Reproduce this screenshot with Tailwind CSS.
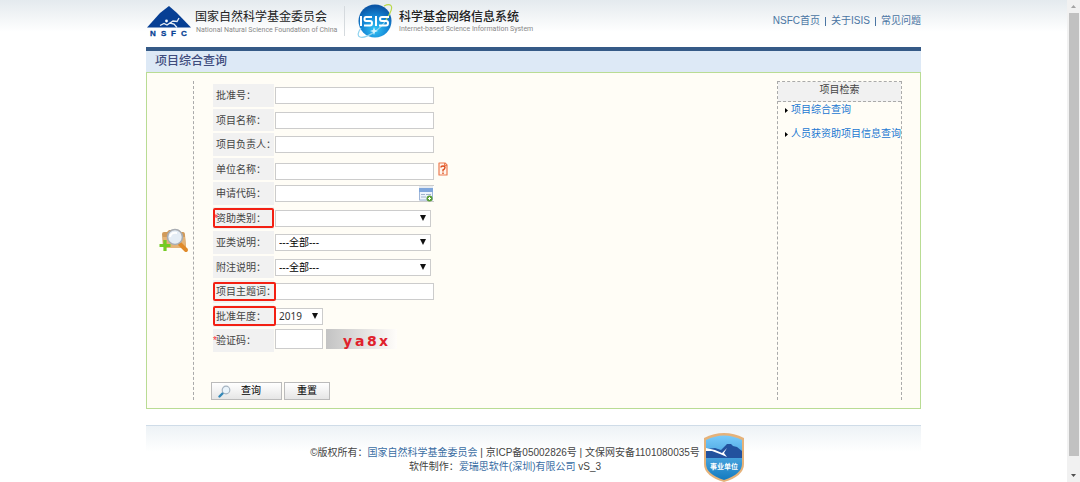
<!DOCTYPE html>
<html lang="zh-CN">
<head>
<meta charset="utf-8">
<meta name="viewport" content="width=device-width, initial-scale=1">
<title>项目综合查询</title>
<script src="https://cdn.jsdelivr.net/npm/@tailwindcss/browser@4"></script>
</head>
<body class="flex min-h-screen bg-white font-['Liberation_Sans','Noto_Sans_CJK_SC',sans-serif] text-[10px] leading-[14px] text-[#444]">
<div class="min-w-0 flex-1 bg-linear-to-b from-[#e4eaee] to-white to-[32px]">
  <div class="mx-auto max-w-[775px]">
    <header class="flex h-[47px] items-start justify-between">
      <div class="flex items-start">
        <svg class="mt-[5px] h-[33px] w-[46px] shrink-0" viewBox="0 0 46 33" role="img" aria-label="NSFC">
          <path d="M23 1 L31 8 L45 22.500 H1 L14 8 Z" fill="#073f94"/>
          <circle cx="20.500" cy="16" r="1.400" fill="#fff"/>
          <path d="M14 20.500 L18 18.500 L21 20 L24 18 L28 19 L31 22.500 M24 18 L27 16 L31 16.500 L33 13" stroke="#e8eef6" stroke-width="1.300" fill="none"/>
          <g font-family="Liberation Sans" font-weight="700" font-size="8" fill="#073f94" stroke="#073f94" stroke-width=".3"><text x="4" y="31">N</text><text x="15" y="31">S</text><text x="25" y="31">F</text><text x="35" y="31">C</text></g>
        </svg>
        <div class="mt-[9px] ml-[3px] w-[139px] whitespace-nowrap">
          <p class="text-[12px] leading-[16px] text-[#222]">国家自然科学基金委员会</p>
          <p class="pl-px font-[Roboto,sans-serif] text-[7px] leading-[10px] text-[#888]">National Natural Science Foundation of China</p>
        </div>
        <div class="mt-[6px] ml-[10px] h-[30px] w-px bg-[#d5dade]"></div>
        <svg class="mt-[3px] ml-[12px] h-[36px] w-[37px] shrink-0" viewBox="0 0 37 36" role="img" aria-label="ISIS">
          <defs><radialGradient id="globe" cx=".5" cy=".75" r=".7"><stop offset="0" stop-color="#31c4f5"/><stop offset=".55" stop-color="#1687d6"/><stop offset="1" stop-color="#0b56a6"/></radialGradient></defs>
          <circle cx="18" cy="18" r="16.500" fill="url(#globe)"/>
          <path d="M29 17 C24 26 9 36 3 34 C0 33 1 29 4 25" fill="none" stroke="#8fd3ef" stroke-width="1.200"/>
          <path d="M27 3 C33 0 37 2 33 10 C32 13 30 15 29 17" fill="none" stroke="#b9d94a" stroke-width="1.200"/>
          <path d="M4 13 V23 M15 14 H9 Q7.500 14 7.500 16 Q7.500 18 9 18 H13 Q15 18 15 20 Q15 22.500 13 22.500 H7 M19 13 V23 M32 14 H25 Q23 14 23 16 Q23 18 25 18 H29 Q31 18 31 20 Q31 22.500 29 22.500 H22" fill="none" stroke="#fff" stroke-width="2"/>
          <path d="M17 24 L18 27 L21 28 L18 29 L17 32 L16 29 L13 28 L16 27 Z" fill="#d7f5ff"/>
        </svg>
        <div class="mt-[9px] ml-[5px] whitespace-nowrap">
          <p class="text-[12px] leading-[16px] font-medium text-[#222]">科学基金网络信息系统</p>
          <p class="font-[Roboto,sans-serif] text-[7px] leading-[8px] text-[#888]">Internet-based Science Information System</p>
        </div>
      </div>
      <nav class="mt-[14px] flex items-center gap-[5px] whitespace-nowrap text-[#4a75a3]">
        <a href="#">NSFC首页</a><span class="h-[9px] w-px bg-[#4a75a3]"></span><a href="#">关于ISIS</a><span class="h-[9px] w-px bg-[#4a75a3]"></span><a href="#">常见问题</a>
      </nav>
    </header>

    <h1 class="border-t-4 border-[#355a87] bg-[#dde9f6] pl-[9px] text-[12px] leading-[21px] font-medium text-[#3f4c7d]">项目综合查询</h1>

    <main class="flex border border-[#b9dc94] bg-[#fffdf6] pt-[8px] pb-[8px]">
      <div class="flex w-[47px] shrink-0 items-center justify-end border-r border-dashed border-[#aaa] pr-[4px]">
        <svg class="h-[26px] w-[30px]" viewBox="0 0 30 26" aria-hidden="true">
          <path d="M3 6 Q3 4 5 4 H8 L10 2 H20 L22 4 H24 Q26 4 26 7 L27 19 H4 Z" fill="#d19a5a"/><path d="M4 9 H26 L27 20 H5 Z" fill="#e5b478"/>
          <path d="M21 16 L27 22" stroke="#e08a2a" stroke-width="4" stroke-linecap="round"/>
          <circle cx="16" cy="9" r="7.500" fill="#e5edf5" stroke="#a9adb3" stroke-width="1.600"/><path d="M11 9 Q12 4 18 5" stroke="#fff" stroke-width="2" fill="none"/>
          <path d="M6 12 V23 M.5 17.500 H11.500" stroke="#73cb22" stroke-width="3.200"/>
        </svg>
      </div>

      <form class="min-w-0 flex-1 pt-[3px] pl-[17px]" onsubmit="return false">
        <div class="ml-[2px] flex flex-col gap-[2px] *:flex *:h-[22px] *:items-center *:gap-px *:odd:h-[23px]">
          <div><label for="no" class="h-full w-[61px] bg-[#f1f1f1] pl-[3px] leading-[23px] whitespace-nowrap">批准号：</label><input id="no" class="h-[17px] w-[159px] border border-[#ccc] bg-white px-1"></div>
          <div><label for="name" class="h-full w-[61px] bg-[#f1f1f1] pl-[3px] leading-[23px] whitespace-nowrap">项目名称：</label><input id="name" class="h-[17px] w-[159px] border border-[#ccc] bg-white px-1"></div>
          <div><label for="leader" class="h-full w-[61px] bg-[#f1f1f1] pl-[3px] leading-[23px] whitespace-nowrap">项目负责人：</label><input id="leader" class="h-[17px] w-[159px] border border-[#ccc] bg-white px-1"></div>
          <div><label for="org" class="h-full w-[61px] bg-[#f1f1f1] pl-[3px] leading-[23px] whitespace-nowrap">单位名称：</label><input id="org" class="h-[17px] w-[159px] self-end border border-[#ccc] bg-white px-1">
            <button type="button" aria-label="帮助" class="ml-[3px]"><svg class="h-[14px] w-[10px]" viewBox="0 0 10 14"><path d="M1 1 H7 L9 3 V13 H1 Z" fill="#fff4ec" stroke="#ec7b50" stroke-width="1.200" stroke-linejoin="round"/><path d="M6.500 1 V3.500 H9" stroke="#ec7b50" fill="none"/><path d="M3 5.500 Q3 4 5 4 Q7 4 7 5.500 Q7 7 5 8 V9.500 M5 10.500 V12" fill="none" stroke="#dc4d1c" stroke-width="1.400"/></svg></button></div>
          <div><label for="code" class="h-full w-[61px] bg-[#f1f1f1] pl-[3px] leading-[23px] whitespace-nowrap">申请代码：</label>
            <div class="flex h-[17px] w-[159px] border-y border-l border-[#ccc] bg-white"><input id="code" class="min-w-0 flex-1 px-1">
              <button type="button" aria-label="选择申请代码" class="mr-px bg-[#e7ebf0]"><svg class="h-[16px] w-[14px]" viewBox="0 0 14 16"><path d="M.5 2.500 H13.500 V14 H.5 Z" fill="#eef4fc" stroke="#9fb6d8"/><path d="M0 2 H14 V6 H0 Z" fill="#7fa6db"/><path d="M2 8.500 H6 M7 8.500 H12 M2 11 H7" stroke="#a2b4cc"/><circle cx="10.500" cy="12.500" r="3" fill="#5a9e37"/><path d="M10.500 11 V14 M9 12.500 H12" stroke="#fff"/></svg></button></div></div>
          <div><label for="type" class="relative h-full w-[61px] bg-[#f1f1f1] pl-[3px] leading-[23px] whitespace-nowrap"><span class="absolute left-px text-red-500">*</span>资助类别：<span class="absolute inset-x-0 inset-y-px rounded-[2px] border-2 border-[#f32013]"></span></label>
            <div class="relative"><select id="type" class="block h-[17px] w-[156px] appearance-none border border-[#ccc] bg-white px-[3px] leading-[15px] text-black"><option></option></select><svg class="pointer-events-none absolute top-[5px] right-[5px] h-[6px] w-[6px]" viewBox="0 0 6 6"><path d="M0 0 H6 L3 6 Z" fill="#111"/></svg></div></div>
          <div><label for="sub" class="h-full w-[61px] bg-[#f1f1f1] pl-[3px] leading-[23px] whitespace-nowrap">亚类说明：</label>
            <div class="relative"><select id="sub" class="block h-[17px] w-[156px] appearance-none border border-[#ccc] bg-white px-[3px] leading-[15px] text-black"><option>---全部---</option></select><svg class="pointer-events-none absolute top-[5px] right-[5px] h-[6px] w-[6px]" viewBox="0 0 6 6"><path d="M0 0 H6 L3 6 Z" fill="#111"/></svg></div></div>
          <div><label for="note" class="h-full w-[61px] bg-[#f1f1f1] pl-[3px] leading-[23px] whitespace-nowrap">附注说明：</label>
            <div class="relative"><select id="note" class="block h-[17px] w-[156px] appearance-none border border-[#ccc] bg-white px-[3px] leading-[15px] text-black"><option>---全部---</option></select><svg class="pointer-events-none absolute top-[5px] right-[5px] h-[6px] w-[6px]" viewBox="0 0 6 6"><path d="M0 0 H6 L3 6 Z" fill="#111"/></svg></div></div>
          <div><label for="topic" class="relative h-full w-[61px] bg-[#f1f1f1] pl-[3px] leading-[23px] whitespace-nowrap">项目主题词：<span class="absolute inset-y-[2px] right-[-2px] left-0 rounded-[2px] border-2 border-[#f32013]"></span></label><input id="topic" class="h-[17px] w-[159px] border border-[#ccc] bg-white px-1"></div>
          <div><label for="year" class="relative z-10 h-full w-[61px] bg-[#f1f1f1] pl-[3px] leading-[23px] whitespace-nowrap">批准年度：<span class="absolute inset-y-px right-[-2px] left-0 rounded-[2px] border-2 border-[#f32013]"></span></label>
            <div class="relative"><select id="year" class="block h-[17px] w-[48px] appearance-none border border-[#ccc] bg-white px-[3px] font-['Noto_Sans',sans-serif] leading-[15px] text-[#333]"><option>2019</option></select><svg class="pointer-events-none absolute top-[5px] right-[5px] h-[6px] w-[6px]" viewBox="0 0 6 6"><path d="M0 0 H6 L3 6 Z" fill="#111"/></svg></div></div>
          <div><label for="captcha" class="relative h-full w-[61px] bg-[#f1f1f1] pl-[3px] leading-[23px] whitespace-nowrap"><span class="absolute left-0 text-red-500">*</span>验证码：</label><input id="captcha" class="h-[20px] w-[48px] self-start border border-[#ccc] bg-white px-1">
            <svg class="ml-[2px] h-[20px] w-[71px] self-start" viewBox="0 0 71 20" role="img" aria-label="验证码"><defs><linearGradient id="cap"><stop offset="0" stop-color="#c3c3c3"/><stop offset="1" stop-color="#fffdfa"/></linearGradient></defs><path d="M0 0 H71 V20 H0 Z" fill="url(#cap)"/><g font-family="DejaVu Sans" font-weight="700" font-size="14" fill="#e0212b"><text x="17" y="17">y</text><text x="29" y="17">a</text><text x="41" y="17">8</text><text x="53" y="17">x</text></g></svg></div>
        </div>
        <div class="mt-[30px] flex gap-[2px] text-black">
          <button type="submit" class="flex h-[18px] w-[71px] items-center gap-[10px] border border-[#bbb] bg-linear-to-b from-white to-[#e6e6e6] pl-[6px]"><svg class="h-[13px] w-[13px]" viewBox="0 0 13 13"><path d="M5 8 L1.500 11.500" stroke="#3388b8" stroke-width="2.400" stroke-linecap="round"/><circle cx="8" cy="5" r="3.800" fill="#eaf4fb" stroke="#a5b3c0" stroke-width="1.200"/></svg>查询</button>
          <button type="reset" class="h-[18px] w-[46px] border border-[#bbb] bg-linear-to-b from-white to-[#e6e6e6]">重置</button>
        </div>
      </form>

      <aside class="mr-[18px] w-[125px] shrink-0 border-x border-t border-dashed border-[#aaa]">
        <h2 class="h-[20px] border-b border-dashed border-[#aaa] bg-[#f1f1f1] text-center leading-[16px]">项目检索</h2>
        <ul class="flex flex-col gap-[10px] pt-px pl-[7px] whitespace-nowrap text-[#1a78d2]">
          <li class="flex items-center gap-[3px]"><svg class="h-[5px] w-[3px] shrink-0" viewBox="0 0 3 5"><path d="M0 0 L3 2.500 L0 5 Z" fill="#000"/></svg><a href="#">项目综合查询</a></li>
          <li class="flex items-center gap-[3px]"><svg class="h-[5px] w-[3px] shrink-0" viewBox="0 0 3 5"><path d="M0 0 L3 2.500 L0 5 Z" fill="#000"/></svg><a href="#">人员获资助项目信息查询</a></li>
        </ul>
      </aside>
    </main>

    <footer class="mt-[16px] flex items-start justify-center gap-[3px] border-t border-[#cfdce8] bg-linear-to-b from-[#edf2f6] to-white to-[26px] pt-[7px] pr-[12px]">
      <div class="pt-[13px] text-center">
        <p>©版权所有：<a href="#" class="text-[#3a6da3]">国家自然科学基金委员会</a> | 京ICP备05002826号 | 文保网安备1101080035号</p>
        <p>软件制作：<a href="#" class="text-[#3a6da3]">爱瑞思软件(深圳)有限公司</a> vS_3</p>
      </div>
      <svg class="h-[49px] w-[42px] shrink-0" viewBox="0 0 42 49" role="img" aria-label="事业单位">
        <defs><linearGradient id="shield" x2="0" y2="1"><stop offset="0" stop-color="#79cbfb"/><stop offset="1" stop-color="#137abf"/></linearGradient></defs>
        <path d="M1 5 Q11 0 21 0 Q31 0 41 5 V31 Q41 43 21 49 Q1 43 1 31 Z" fill="#e5b27a"/>
        <path d="M3 7 Q12 2.500 21 2.500 Q30 2.500 39 7 V31 Q39 41 21 47 Q3 41 3 31 Z" fill="url(#shield)"/>
        <path d="M3 16 L12 15 L18 17 L24 11 L28 11 L30 13 L34 14 L39 18 V25 H3 Z" fill="#22529e"/>
        <path d="M3 15 L12 17 L19 20 L24 15 L21 20 L24 24 L17 21 L9 18 H3 Z" fill="#fff"/>
        <path d="M3 19 Q15 19 19 25 H14 Q9 21 3 21 Z" fill="#22529e"/>
        <text x="21" y="36" text-anchor="middle" font-family="Noto Sans CJK SC" font-weight="700" font-size="7" fill="#fff">事业单位</text>
      </svg>
    </footer>
  </div>
</div>
<div class="flex w-[13px] shrink-0 flex-col items-center bg-[#f1f1f1]" aria-hidden="true">
  <svg class="h-[13px] w-[13px]" viewBox="0 0 13 13"><path d="M4 8 L6.500 5 L9 8 Z" fill="#a3a3a3"/></svg>
  <div class="w-[10px] flex-1 bg-[#c1c1c1]"></div>
  <svg class="mt-[13px] h-[13px] w-[13px]" viewBox="0 0 13 13"><path d="M4 5 L6.500 8 L9 5 Z" fill="#505050"/></svg>
</div>
</body>
</html>
